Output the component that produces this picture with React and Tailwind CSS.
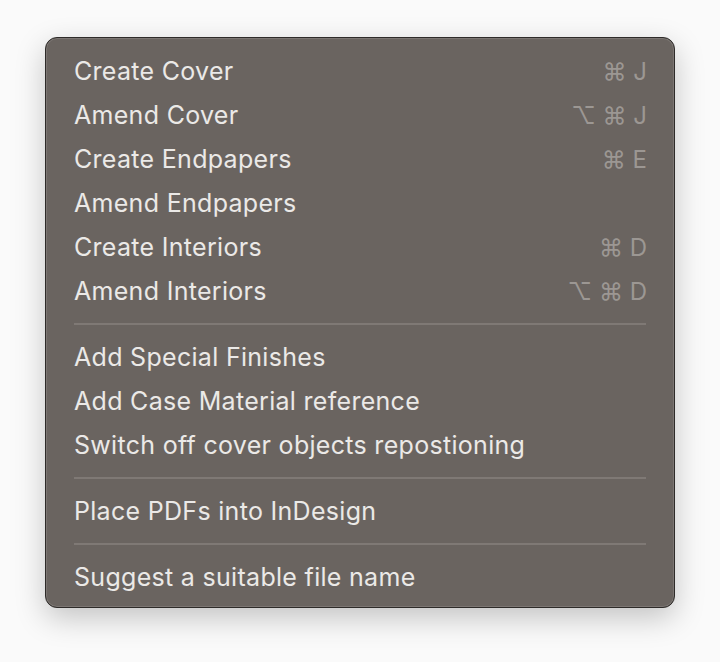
import React from "react";

const groups = [
  [
    ["Create Cover", "⌘ J"],
    ["Amend Cover", "⌥ ⌘ J"],
    ["Create Endpapers", "⌘ E"],
    ["Amend Endpapers", ""],
    ["Create Interiors", "⌘ D"],
    ["Amend Interiors", "⌥ ⌘ D"],
  ],
  [
    ["Add Special Finishes", ""],
    ["Add Case Material reference", ""],
    ["Switch off cover objects repostioning", ""],
  ],
  [["Place PDFs into InDesign", ""]],
  [["Suggest a suitable file name", ""]],
];

export default function App() {
  return (
    <div
      className="w-[720px] h-[662px] bg-[#fafafa] pt-[37px] pl-[45px]"
      style={{ fontFamily: "Inter, 'Noto Sans', sans-serif" }}
    >
      <div className="w-[630px] rounded-[12px] border border-[#2e2b29] bg-[#6a6460] shadow-[0_10px_30px_rgba(0,0,0,0.22),inset_0_0_0_1px_rgba(255,255,255,0.12)] pt-[11px] pb-[8px] pl-[28px] pr-[27px]">
        {groups.map((g, gi) => (
          <div key={gi}>
            {gi > 0 && (
              <div className="py-[10px]">
                <div className="h-[2px] bg-[#7f7975] mr-[1px]" />
              </div>
            )}
            {g.map(([label, sc]) => (
              <div
                key={label}
                className="h-[44px] flex items-center justify-between"
              >
                <span className="text-[25px] text-[#ebe9e7] tracking-[0.3px] mt-[1px]">
                  {label}
                </span>
                {sc && (
                  <span className="text-[24px] text-[#9c9793] mt-[1px]">
                    {sc}
                  </span>
                )}
              </div>
            ))}
          </div>
        ))}
      </div>
    </div>
  );
}
